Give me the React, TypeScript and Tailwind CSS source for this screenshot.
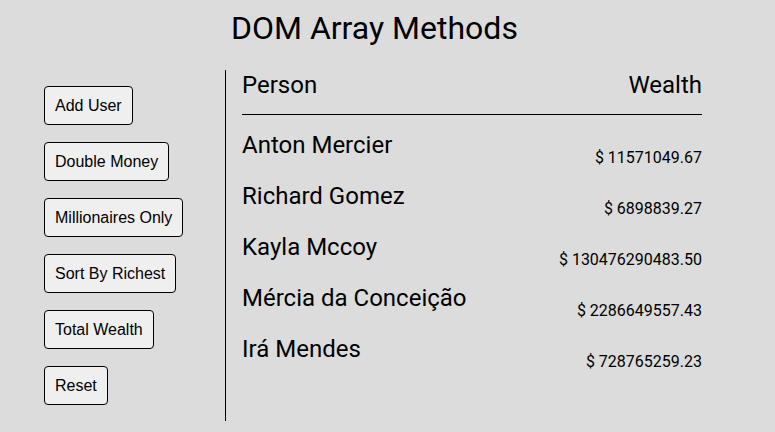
const users = [
  { name: 'Anton Mercier', wealth: '$ 11571049.67' },
  { name: 'Richard Gomez', wealth: '$ 6898839.27' },
  { name: 'Kayla Mccoy', wealth: '$ 130476290483.50' },
  { name: 'Mércia da Conceição', wealth: '$ 2286649557.43' },
  { name: 'Irá Mendes', wealth: '$ 728765259.23' },
]

const actions = ['Add User', 'Double Money', 'Millionaires Only', 'Sort By Richest', 'Total Wealth', 'Reset']

export default function App() {
  return (
    <div className="w-[775px] h-[432px] bg-[#dcdcdc] overflow-hidden font-['Roboto',sans-serif] text-black">
      <h1 className="pl-[231px] pt-[9px] text-[32px] leading-[38px] font-normal">DOM Array Methods</h1>

      <div className="flex mt-[23px]">
        {/* Buttons */}
        <aside className="w-[225px] pl-[44px] pt-[16px] flex flex-col items-start gap-[17px]">
          {actions.map((label) => (
            <button
              key={label}
              className="h-[39px] px-[10px] bg-[#efefef] border border-black rounded-[4px] text-[16px] font-['Liberation_Sans',Arial,sans-serif] text-black"
            >
              {label}
            </button>
          ))}
        </aside>

        {/* Table */}
        <main className="w-[477px] h-[351px] border-l border-black pl-[16px]">
          <div className="flex justify-between items-start h-[45px] pt-[1px] text-[24px] leading-[28px] border-b border-black">
            <span>Person</span>
            <span>Wealth</span>
          </div>
          <div className="pt-[16px] flex flex-col">
            {users.map((u) => (
              <div key={u.name} className="flex justify-between h-[51px]">
                <span className="text-[24px] leading-[28px]">{u.name}</span>
                <span className="text-[16px] leading-[19px] pt-[17px]">{u.wealth}</span>
              </div>
            ))}
          </div>
        </main>
      </div>
    </div>
  )
}
